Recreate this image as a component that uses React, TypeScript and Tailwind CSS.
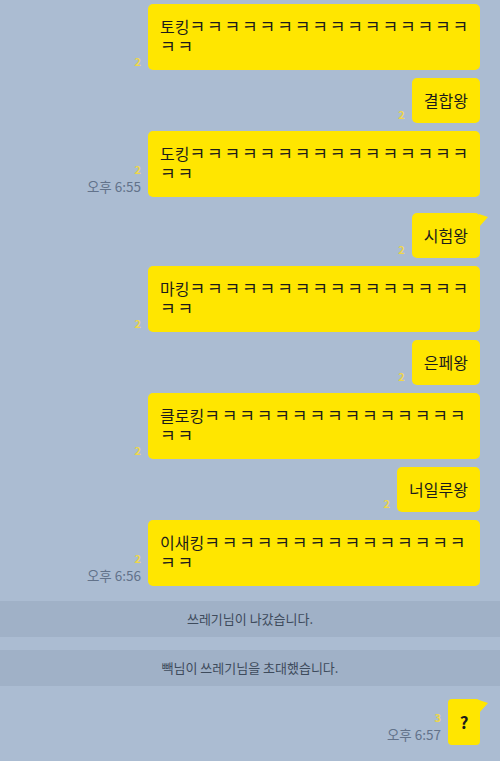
import React from "react";

const FONT = { fontFamily: '"Noto Sans CJK KR", "Noto Sans", sans-serif' };

function Tail() {
  return (
    <svg className="absolute right-[-8px] top-[1px]" width="9" height="13" viewBox="0 0 9 13">
      <polygon points="0,0 9,3 0,13" fill="#ffe600" />
    </svg>
  );
}

function Meta({ read, time }: { read: string; time?: string }) {
  return (
    <div className="flex flex-col items-end mr-[7px] pb-[3px]">
      <span className="text-[11px] leading-[12px] font-bold text-[#eed64a]">{read}</span>
      {time && (
        <span className="text-[13.5px] leading-[16px] text-[#62728a] mt-[3px]">{time}</span>
      )}
    </div>
  );
}

function LongMsg({ head, time, tail }: { head: string; time?: string; tail?: boolean }) {
  const n = head.length === 2 ? 16 : 15;
  return (
    <div className="flex justify-end items-end pr-[20px]">
      <Meta read="2" time={time} />
      <div className="relative w-[332px] bg-[#ffe600] rounded-[5px] pl-[12px] pt-[12px] pb-[14px] text-[16px] leading-[20px] text-[#1b1b1b] whitespace-nowrap">
        {tail && <Tail />}
        <div>
          {head}
          <span className="text-[17px] tracking-[1.9px]">{"ㅋ".repeat(n)}</span>
        </div>
        <div className="text-[17px] tracking-[1.9px]">ㅋㅋ</div>
      </div>
    </div>
  );
}

function ShortMsg({ text, tail, read = "2", time }: { text: string; tail?: boolean; read?: string; time?: string }) {
  return (
    <div className="flex justify-end items-end pr-[20px]">
      <Meta read={read} time={time} />
      <div className="relative bg-[#ffe600] rounded-[5px] px-[12px] pt-[12px] pb-[13px] text-[16px] leading-[20px] text-[#1b1b1b] whitespace-nowrap">
        {tail && <Tail />}
        {text}
      </div>
    </div>
  );
}

function SystemMsg({ text }: { text: string }) {
  return (
    <div className="h-[36px] bg-[#a0b1c7] flex items-center justify-center text-[13px] text-[#3e4b5c]">
      {text}
    </div>
  );
}

export default function App() {
  return (
    <div style={FONT} className="w-[500px] h-[761px] overflow-hidden bg-[#abbcd2] pt-[4px] flex flex-col">
      <LongMsg head="토킹" />
      <div className="h-[8px]" />
      <ShortMsg text="결합왕" />
      <div className="h-[8px]" />
      <LongMsg head="도킹" time="오후 6:55" />
      <div className="h-[16px]" />
      <ShortMsg text="시험왕" tail />
      <div className="h-[8px]" />
      <LongMsg head="마킹" />
      <div className="h-[8px]" />
      <ShortMsg text="은페왕" />
      <div className="h-[8px]" />
      <LongMsg head="클로킹" />
      <div className="h-[8px]" />
      <ShortMsg text="너일루왕" />
      <div className="h-[8px]" />
      <LongMsg head="이새킹" time="오후 6:56" />
      <div className="h-[15px]" />
      <SystemMsg text="쓰레기님이 나갔습니다." />
      <div className="h-[13px]" />
      <SystemMsg text="빽님이 쓰레기님을 초대했습니다." />
      <div className="h-[13px]" />
      <div className="flex justify-end items-end pr-[20px]">
        <Meta read="3" time="오후 6:57" />
        <div className="relative w-[32px] h-[46px] bg-[#ffe600] rounded-[4px] flex items-center justify-center text-[17px] font-bold text-[#1b1b1b]">
          <Tail />
          ?
        </div>
      </div>
    </div>
  );
}
